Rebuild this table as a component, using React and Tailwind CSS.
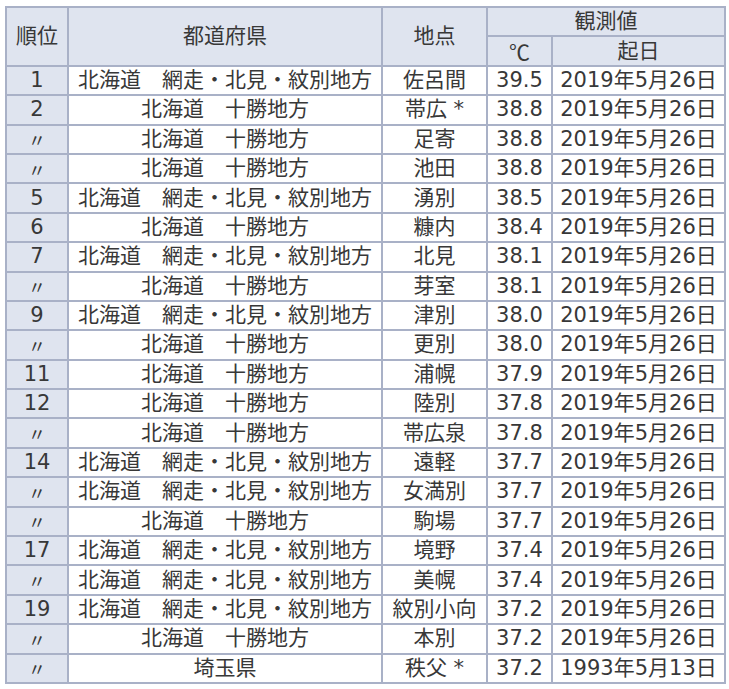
const A = '北海道　網走・北見・紋別地方';
const T = '北海道　十勝地方';
const D = '2019年5月26日';
const R = '〃';

const rows = [
  ['1', A, '佐呂間', '39.5', D],
  ['2', T, '帯広 *', '38.8', D],
  [R, T, '足寄', '38.8', D],
  [R, T, '池田', '38.8', D],
  ['5', A, '湧別', '38.5', D],
  ['6', T, '糠内', '38.4', D],
  ['7', A, '北見', '38.1', D],
  [R, T, '芽室', '38.1', D],
  ['9', A, '津別', '38.0', D],
  [R, T, '更別', '38.0', D],
  ['11', T, '浦幌', '37.9', D],
  ['12', T, '陸別', '37.8', D],
  [R, T, '帯広泉', '37.8', D],
  ['14', A, '遠軽', '37.7', D],
  [R, A, '女満別', '37.7', D],
  [R, T, '駒場', '37.7', D],
  ['17', A, '境野', '37.4', D],
  [R, A, '美幌', '37.4', D],
  ['19', A, '紋別小向', '37.2', D],
  [R, T, '本別', '37.2', D],
  [R, '埼玉県', '秩父 *', '37.2', '1993年5月13日'],
];

const cell = 'border-2 border-[#a9b1c7] text-center p-0 leading-none whitespace-nowrap';
const head = `${cell} bg-[#dfe4ef] font-normal`;

export default function App() {
  return (
    <div className="bg-white w-[729px] h-[689px] pt-[6px] pl-[5px] text-[#383838] text-[21px] font-['DejaVu_Sans','Noto_Sans_CJK_JP',sans-serif]">
      <table className="table-fixed border-collapse w-[719px]">
        <colgroup>
          <col className="w-[62px]" />
          <col className="w-[314px]" />
          <col className="w-[105px]" />
          <col className="w-[65px]" />
          <col className="w-[173px]" />
        </colgroup>
        <thead>
          <tr className="h-[29.4px]">
            <th rowSpan={2} className={head}>順位</th>
            <th rowSpan={2} className={head}>都道府県</th>
            <th rowSpan={2} className={head}>地点</th>
            <th colSpan={2} className={head}>観測値</th>
          </tr>
          <tr className="h-[29.4px]">
            <th className={`${head} font-['Noto_Sans_CJK_JP',sans-serif]`}>℃</th>
            <th className={head}>起日</th>
          </tr>
        </thead>
        <tbody>
          {rows.map((r, i) => (
            <tr key={i} className="h-[29.4px]">
              <td className={`${cell} bg-[#dfe4ef] ${r[0] === R ? "text-[18px] font-['Noto_Sans_CJK_JP',sans-serif]" : ''}`}>{r[0]}</td>
              <td className={cell}>{r[1]}</td>
              <td className={cell}>{r[2]}</td>
              <td className={cell}>{r[3]}</td>
              <td className={cell}>{r[4]}</td>
            </tr>
          ))}
        </tbody>
      </table>
    </div>
  );
}
